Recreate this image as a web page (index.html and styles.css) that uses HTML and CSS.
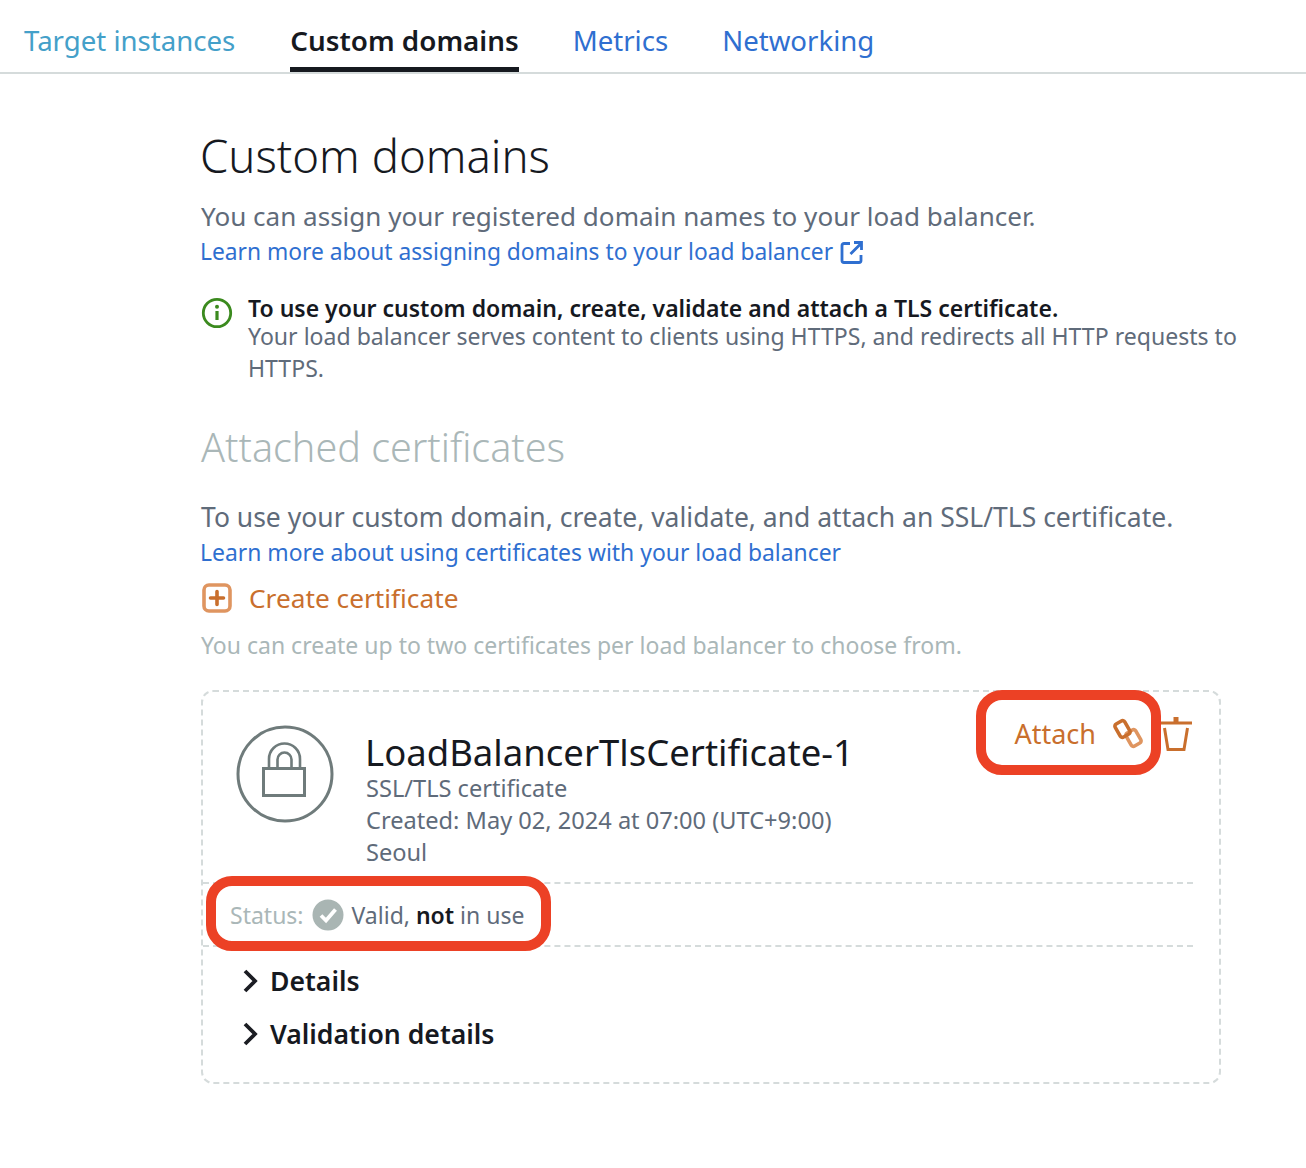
FILE: index.html
```html
<!DOCTYPE html>
<html lang="en">
<head>
<meta charset="utf-8">
<title>Custom domains</title>
<link rel="stylesheet" href="styles.css">
</head>
<body>
<nav class="tabs">
  <a class="tab tab-visited">Target instances</a>
  <a class="tab tab-active">Custom domains</a>
  <a class="tab">Metrics</a>
  <a class="tab">Networking</a>
</nav>
<main class="content">
  <h1 class="title">Custom domains</h1>
  <p class="lead">You can assign your registered domain names to your load balancer.</p>
  <a class="link link-ext">Learn more about assigning domains to your load balancer
    <svg class="ext-icon" width="24" height="24" viewBox="0 0 24 24" fill="none" stroke="#2f6fd0" stroke-width="2.800"><path d="M10 3.500H4a2 2 0 0 0-2 2v15a2 2 0 0 0 2 2h15a2 2 0 0 0 2-2V15"/><path d="M10.500 14L21 3.500M14 2.500h7.500V10"/></svg>
  </a>
  <div class="notice">
    <svg class="notice-icon" width="32" height="32" viewBox="0 0 32 32" fill="none"><circle cx="16" cy="16" r="13.7" stroke="#3b8a1e" stroke-width="2.8"/><path d="M16 14v9" stroke="#3b8a1e" stroke-width="3.2"/><circle cx="16" cy="9.8" r="2" fill="#3b8a1e"/></svg>
    <div class="notice-text">
      <strong class="notice-head">To use your custom domain, create, validate and attach a TLS certificate.</strong>
      <span class="notice-body">Your load balancer serves content to clients using HTTPS, and redirects all HTTP requests to HTTPS.</span>
    </div>
  </div>
  <h2 class="subtitle">Attached certificates</h2>
  <p class="lead lead-second">To use your custom domain, create, validate, and attach an SSL/TLS certificate.</p>
  <a class="link link-cert">Learn more about using certificates with your load balancer</a>
  <a class="create">
    <svg width="32" height="32" viewBox="0 0 32 32" fill="none"><rect x="3" y="3" width="26" height="26" rx="5" stroke="#df9560" stroke-width="3.6"/><path d="M16 9.500v13M9.500 16h13" stroke="#c96f2d" stroke-width="3.6" stroke-linecap="round"/></svg>
    <span>Create certificate</span>
  </a>
  <p class="hint">You can create up to two certificates per load balancer to choose from.</p>
  <section class="card">
    <div class="card-top">
      <svg class="lock" width="98" height="98" viewBox="0 0 98 98" fill="none" stroke="#6f7b7b" stroke-width="3"><circle cx="49" cy="49" r="47"/><rect x="27.500" y="43.500" width="41" height="27"/><path d="M33 42v-8a15.500 15.500 0 0 1 31 0v8" stroke-width="2.600"/><path d="M41.500 42v-7.500a7 7 0 0 1 14 0V42" stroke-width="2.600"/></svg>
      <div class="cert">
        <h3 class="cert-name">LoadBalancerTlsCertificate-1</h3>
        <div class="cert-line">SSL/TLS certificate</div>
        <div class="cert-line">Created: May 02, 2024 at 07:00 (UTC+9:00)</div>
        <div class="cert-line">Seoul</div>
      </div>
      <div class="actions">
        <a class="attach">Attach
          <svg width="32" height="32" viewBox="0 0 32 32" fill="none" stroke-width="3.600"><rect x="16" y="12.500" width="11" height="15" rx="2.500" stroke="#df9560" transform="rotate(-30 21.500 20)"/><rect x="5" y="3.500" width="11" height="15" rx="2.500" stroke="#c96f2d" transform="rotate(-30 10.500 11)"/></svg>
        </a>
        <svg class="trash" width="34" height="36" viewBox="0 0 34 36" fill="none" stroke="#c96f2d" stroke-width="3"><path d="M0 6h33"/><path d="M17 0v5" stroke-width="5"/><path d="M5.500 11L9 32.500h16L28.500 11"/></svg>
      </div>
    </div>
    <div class="status-row">
      <span class="status-label">Status:</span>
      <svg width="32" height="32" viewBox="0 0 32 32"><circle cx="16" cy="16" r="15.500" fill="#a9b5b3"/><path d="M9 16.500l5 5 9.500-11" fill="none" stroke="#fff" stroke-width="3.800"/></svg>
      <span class="status-text">Valid, <strong>not</strong> in use</span>
    </div>
    <div class="expanders">
      <div class="expander">
        <svg width="18" height="26" viewBox="0 0 18 26" fill="none" stroke="#1b1d23" stroke-width="3.8"><path d="M3 3l10 10L3 23"/></svg>
        <span>Details</span>
      </div>
      <div class="expander">
        <svg width="18" height="26" viewBox="0 0 18 26" fill="none" stroke="#1b1d23" stroke-width="3.8"><path d="M3 3l10 10L3 23"/></svg>
        <span>Validation details</span>
      </div>
    </div>
    <div class="mark mark-attach"></div>
    <div class="mark mark-status"></div>
  </section>
</main>
</body>
</html>
```
FILE: styles.css
```css
* { box-sizing: border-box; }
html, body { margin: 0; padding: 0; background: #fff; }
body { font-family: "Noto Sans", "Open Sans", sans-serif; color: #5f6b7a; height: 1168px; overflow: hidden; }
h1, h2, h3, p { margin: 0; font-weight: 400; }
a { display: block; }

.tabs { display: flex; height: 74px; padding-left: 24px; gap: 54px; border-bottom: 2px solid #d5dbdb; }
.tab { font-size: 27.6px; line-height: 40px; padding-top: 20px; height: 72px; color: #2f6fd0; white-space: nowrap; }
.tab-visited { color: #44a0c9; }
.tab-active { color: #16191f; font-weight: 600; font-size: 27.8px; margin-left: 1px; border-bottom: 5px solid #16191f; }

.content { padding-left: 201px; }
.title { font-size: 45.5px; line-height: 60px; color: #16191f; margin: 51px 0 0 -1px; font-weight: 300; }
.lead { font-size: 26.06px; line-height: 36px; margin-top: 13px; color: #5f6b7a; }
.link { line-height: 34px; color: #2f6fd0; display: flex; align-items: center; gap: 7px; margin: 1px 0 0 -1px; white-space: nowrap; }
.link-ext { font-size: 22.78px; }
.link-cert { font-size: 22.9px; }
.notice { display: flex; gap: 15px; margin-top: 27px; }
.notice-icon { flex: none; margin-top: 1px; }
.notice-text { width: 1000px; font-size: 23.07px; line-height: 32px; }
.notice-head { display: block; font-weight: 600; font-size: 23px; color: #16191f; line-height: 24px; }
.notice-body { display: block; }
.subtitle { font-size: 39.5px; line-height: 50px; color: #aab7b8; margin-top: 38px; font-weight: 300; }
.lead-second { margin-top: 27px; font-size: 26.5px; }
.create { display: flex; align-items: center; gap: 16px; margin-top: 10px; font-size: 26.25px; line-height: 36px; color: #c96f2d; }
.hint { font-size: 23px; line-height: 32px; color: #aab7b8; margin-top: 13px; }

.card { position: relative; width: 1020px; height: 394px; margin-top: 29px; border: 2px dashed #d5dbdb; border-radius: 12px; }
.card-top { display: flex; padding: 19px 0 0 33px; height: 192px; border-bottom: 2px dashed #d5dbdb; margin-right: 26px; }
.lock { flex: none; margin-top: 14px; }
.cert { margin-left: 32px; flex: 1; padding-top: 21px; }
.cert-name { font-size: 36.5px; line-height: 40px; color: #16191f; margin-left: -1px; }
.cert-line { font-size: 23.6px; line-height: 32px; white-space: nowrap; }
.actions { display: flex; gap: 15px; align-items: flex-start; padding-top: 6px; }
.attach { display: flex; align-items: center; gap: 16px; margin-top: 1px; font-size: 27px; line-height: 32px; color: #c96f2d; }
.status-row { display: flex; align-items: center; gap: 8px; height: 63px; padding-left: 27px; font-size: 23px; margin-right: 26px; border-bottom: 2px dashed #d5dbdb; }
.status-label { color: #aab7b8; }
.status-text strong { color: #16191f; font-weight: 600; }
.expanders { padding-top: 7px; }
.expander { display: flex; align-items: center; gap: 10px; padding-left: 39px; font-size: 26.6px; font-weight: 600; color: #16191f; height: 53px; }
.mark { position: absolute; border: 10px solid #ec4125; background: transparent; border-radius: 26px; }
.mark-attach { left: 773px; top: -2px; width: 185px; height: 85px; }
.mark-status { left: 3px; top: 184px; width: 345px; height: 75px; }
```
